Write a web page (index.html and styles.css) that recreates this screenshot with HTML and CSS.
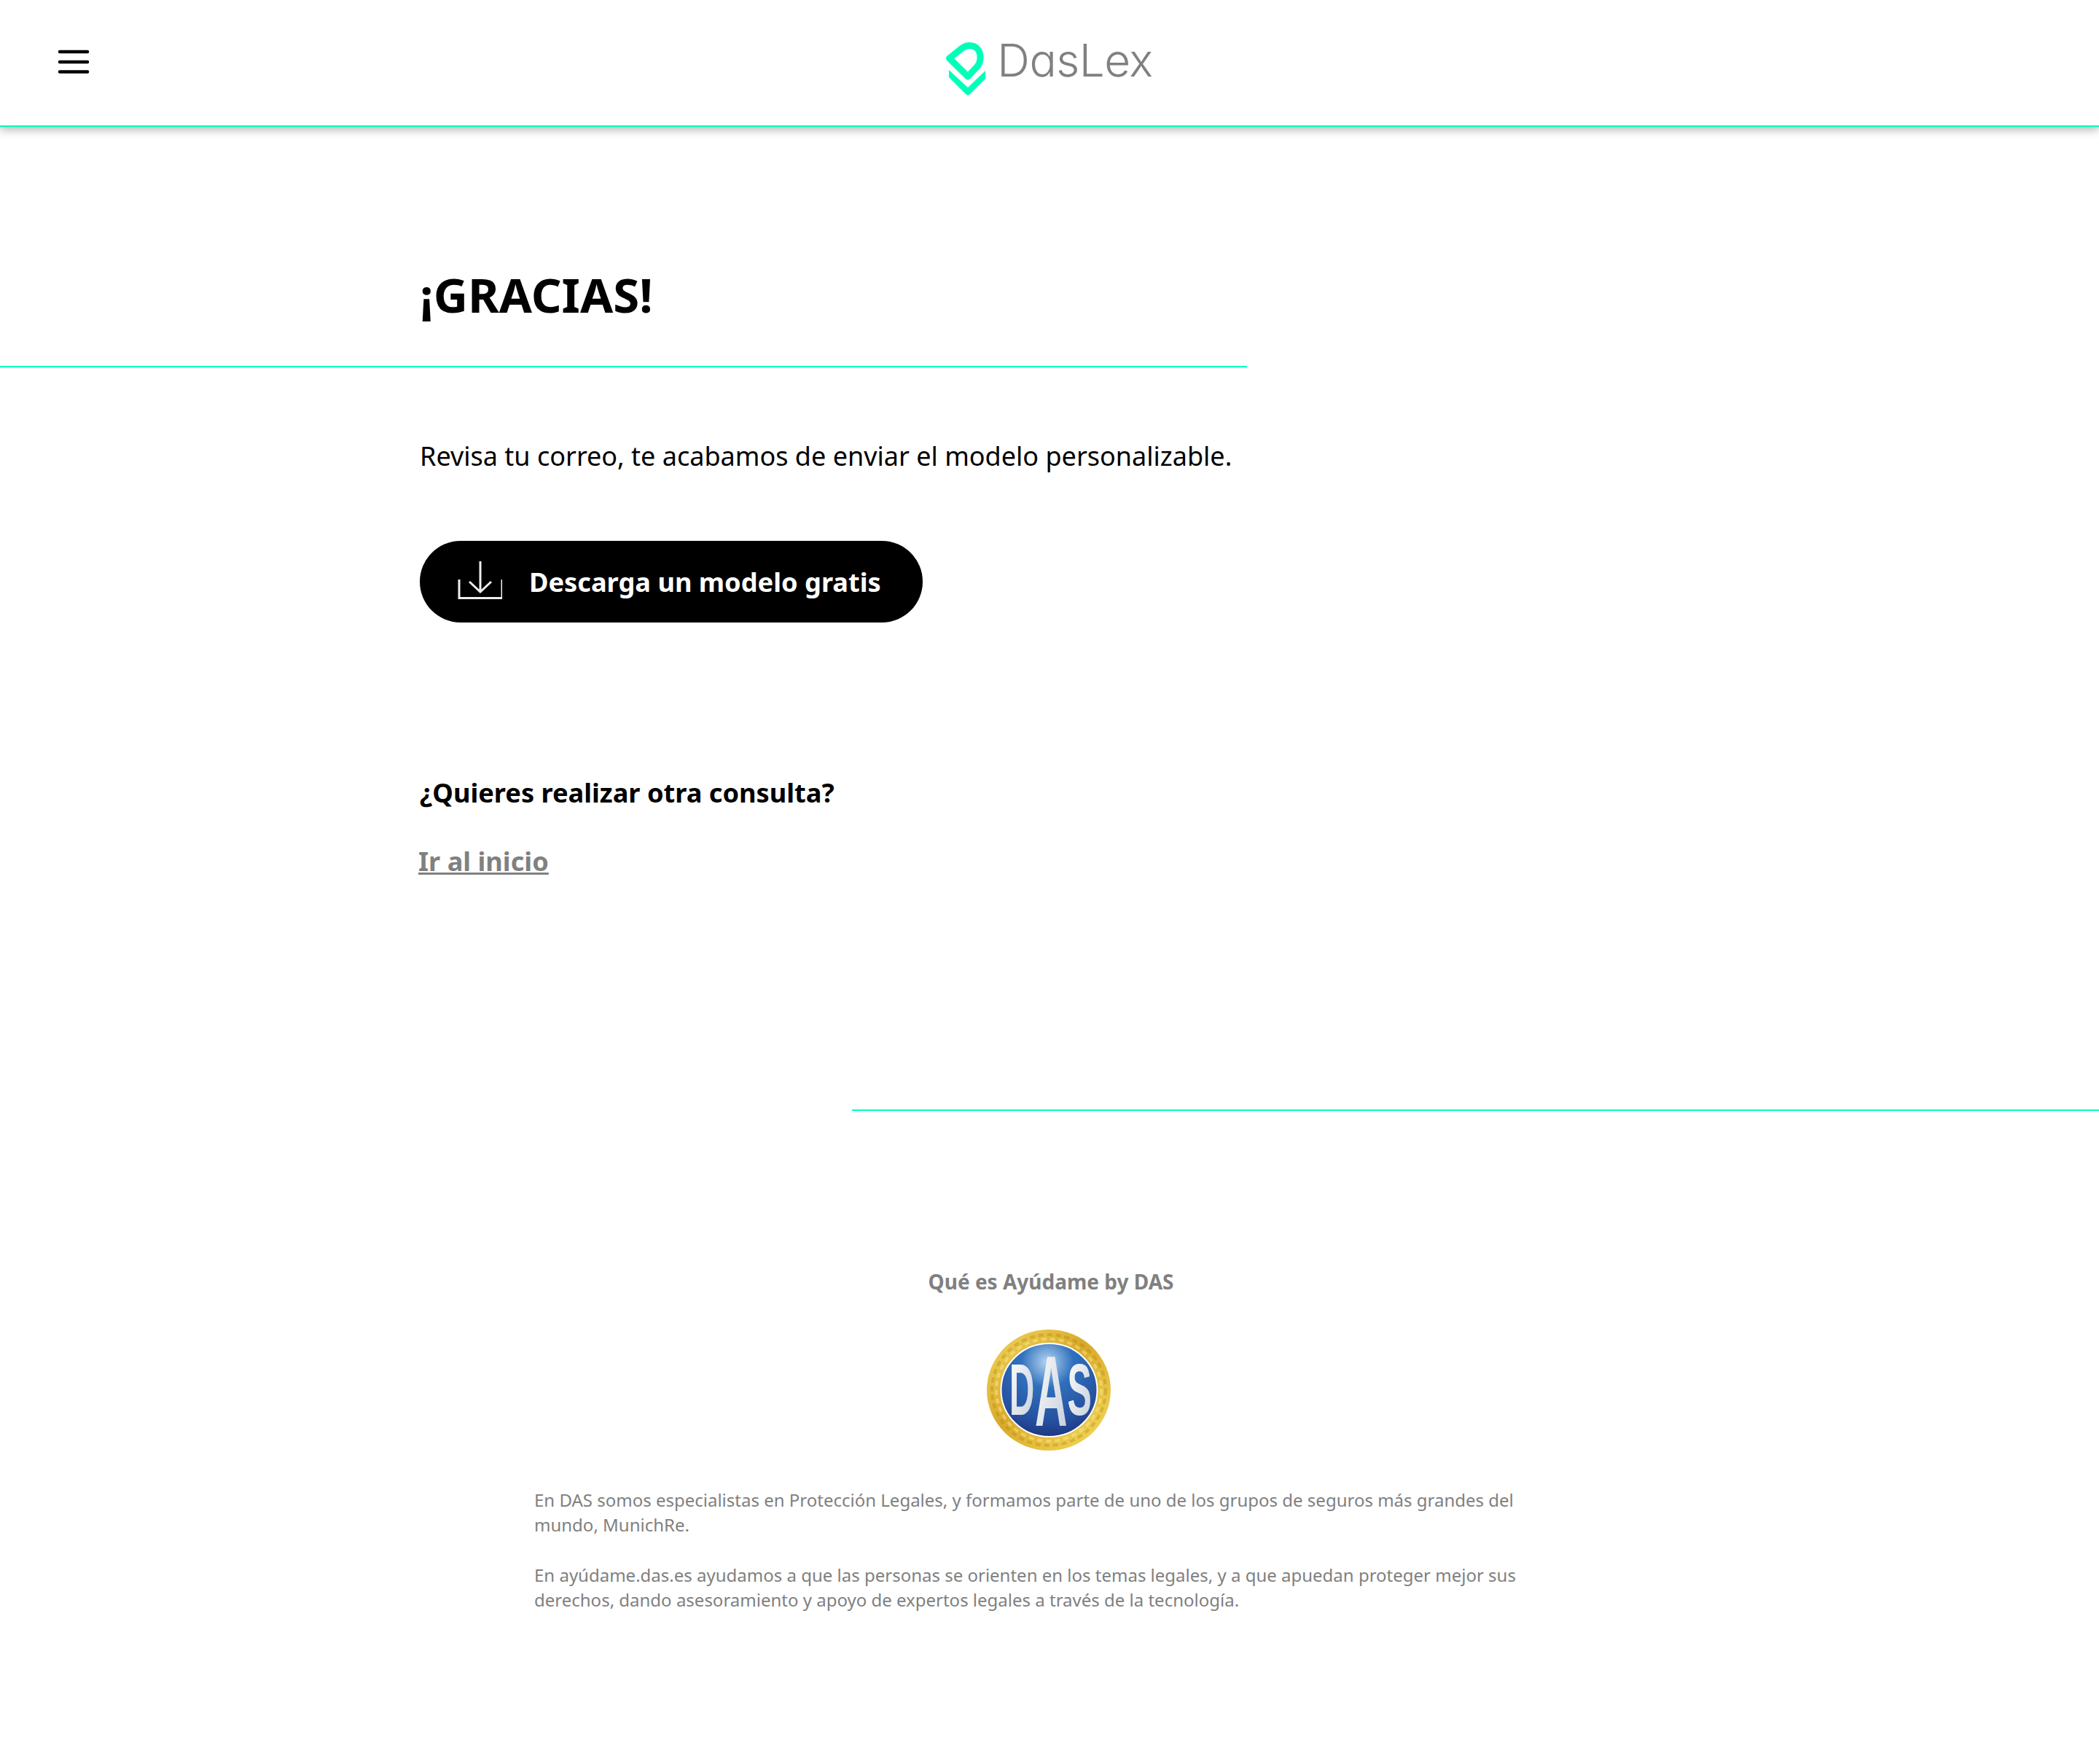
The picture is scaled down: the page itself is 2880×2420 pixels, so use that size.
FILE: index.html
```html
<!DOCTYPE html>
<html lang="es">
<head>
<meta charset="utf-8">
<title>DasLex</title>
<link rel="stylesheet" href="styles.css">
</head>
<body>
<header class="topbar">
  <button class="menu" aria-label="Menu">
    <svg width="44" height="34" viewBox="0 0 44 34"><path d="M3 3H41M3 17H41M3 30.500H41" stroke="#000" stroke-width="4.500" stroke-linecap="round" fill="none"/></svg>
  </button>
  <div class="brand">
    <svg class="brand-mark" width="56" height="74" viewBox="0 0 56 74">
      <path d="M31 47L5.500 22L23 8Q28 4.500 33 4.500C43 4.500 48 12 48 21Q48 28 44 33Z" fill="none" stroke="#00ffb9" stroke-width="9" stroke-linejoin="round"/>
      <path d="M5 38L31 62L55 39V50L34 71Q31 74 28 71L5 48Z" fill="#00ffb9"/>
    </svg>
    <span class="brand-name">DasLex</span>
  </div>
</header>
<main class="main">
  <section class="title-block"><h1 class="title">¡GRACIAS!</h1></section>
  <section class="content">
    <p class="lead">Revisa tu correo, te acabamos de enviar el modelo personalizable.</p>
    <a class="cta" href="#">
      <svg class="cta-icon" width="62" height="54" viewBox="0 0 62 54"><path d="M3 25V50.500H62V25M32 0V42M17 28L32 42L47 28" fill="none" stroke="#eee" stroke-width="3"/></svg>
      <span>Descarga un modelo gratis</span>
    </a>
    <h2 class="question">¿Quieres realizar otra consulta?</h2>
    <a class="home-link" href="#">Ir al inicio</a>
  </section>
  <div class="rule-right"></div>
</main>
<footer class="footer">
  <h3 class="footer-title">Qué es Ayúdame by DAS</h3>
  <svg class="das" width="170" height="167" viewBox="0 0 170 167">
    <defs>
      <radialGradient id="blue" cx="48%" cy="20%" r="85%"><stop offset="0" stop-color="#b5d6f0"/><stop offset=".32" stop-color="#3070bd"/><stop offset=".75" stop-color="#25509f"/><stop offset="1" stop-color="#1d2f78"/></radialGradient>
      <linearGradient id="gold" x1="0" y1="0" x2="1" y2="1"><stop offset="0" stop-color="#f0d860"/><stop offset=".45" stop-color="#d9a928"/><stop offset="1" stop-color="#f5dc5e"/></linearGradient>
      <linearGradient id="silver" x1="0" y1="0" x2="1" y2="1"><stop offset="0" stop-color="#fff"/><stop offset="1" stop-color="#c4ccd8"/></linearGradient>
    </defs>
    <ellipse cx="85" cy="83" rx="85" ry="83" fill="url(#gold)"/>
    <ellipse cx="85" cy="83" rx="78" ry="76" fill="none" stroke="#a87c10" stroke-width="4" stroke-dasharray="7 5" opacity=".3"/>
    <ellipse cx="85" cy="83" rx="72" ry="70" fill="none" stroke="#fff3a0" stroke-width="4" stroke-dasharray="7 5" opacity=".4"/>
    <ellipse cx="85.500" cy="83" rx="66" ry="64" fill="url(#blue)" stroke="#fff" stroke-width="2"/>
    <text class="das-side" transform="translate(31 117) scale(.95 2)" fill="url(#silver)">D</text>
    <text class="das-mid" transform="translate(66 132) scale(.88 1.950)" fill="url(#silver)">A</text>
    <text class="das-side" transform="translate(110.500 117) scale(1 2)" fill="url(#silver)">S</text>
  </svg>
  <div class="about">
    <p>En DAS somos especialistas en Protección Legales, y formamos parte de uno de los grupos de seguros más grandes del mundo, MunichRe.</p>
    <p>En ayúdame.das.es ayudamos a que las personas se orienten en los temas legales, y a que apuedan proteger mejor sus derechos, dando asesoramiento y apoyo de expertos legales a través de la tecnología.</p>
  </div>
</footer>
</body>
</html>
```
FILE: styles.css
```css
* { box-sizing: border-box; }
html, body { margin: 0; padding: 0; background: #fff; }
body { font-family: "Noto Sans", sans-serif; color: #000; height: 2420px; overflow: hidden; }

.topbar {
  position: relative;
  height: 174px;
  border-bottom: 2px solid #00ffb9;
  box-shadow: 0 4px 12px rgba(0, 0, 0, .3);
  display: flex;
  justify-content: center;
}
.menu {
  position: absolute;
  left: 79px;
  top: 68px;
  width: 44px;
  height: 34px;
  padding: 0;
  border: 0;
  background: none;
  line-height: 0;
}
.brand { display: flex; align-items: flex-start; gap: 15px; height: 100%; padding-top: 58px; margin-left: -1px; }
.brand-mark { display: block; }
.brand-name {
  font-family: "Inter", sans-serif;
  font-feature-settings: "cv11" 1;
  font-weight: 300;
  font-size: 62px;
  line-height: 46px;
  letter-spacing: -.5px;
  margin-top: 2px;
  color: #808080;
}

.title-block {
  width: 1711px;
  height: 330px;
  padding: 186px 0 0 576px;
  border-bottom: 2px solid #00ffb9;
}
.title { margin: 0; font-size: 65.300px; line-height: 88px; font-weight: 700; }

.content { padding-left: 576px; }
.lead { margin: 92px 0 0; font-size: 36px; line-height: 60px; }
.cta {
  display: flex;
  align-items: center;
  gap: 37px;
  width: 690px;
  height: 112px;
  margin-top: 86px;
  padding-left: 51px;
  border-radius: 56px;
  background: #000;
  color: #fff;
  font-size: 36.200px;
  font-weight: 700;
  text-decoration: none;
}
.cta-icon { margin-top: -2px; }
.question { margin: 203px 0 0; font-size: 36.200px; line-height: 60px; font-weight: 700; }
.home-link {
  display: inline-block;
  margin: 34px 0 0 -2px;
  color: #808080;
  font-size: 36.200px;
  line-height: 60px;
  font-weight: 700;
  text-decoration: underline;
}
.rule-right { height: 2px; margin: 311px 0 0 1169px; background: #00ffb9; }

.footer { display: flex; flex-direction: column; align-items: center; padding-top: 198px; }
.footer-title { margin: 0 0 0 4px; font-size: 28px; line-height: 72px; font-weight: 700; color: #808080; }
.das { display: block; margin: 30px 0 0 -2px; }
.das-side { font-family: "Liberation Sans", sans-serif; font-weight: 700; font-size: 50px; }
.das-mid { font-family: "Liberation Sans", sans-serif; font-weight: 700; font-size: 70px; }
.about { width: 1414px; margin-top: 50px; font-size: 24px; line-height: 34px; color: #808080; }
.about p { margin: 0 0 35px; }
```
